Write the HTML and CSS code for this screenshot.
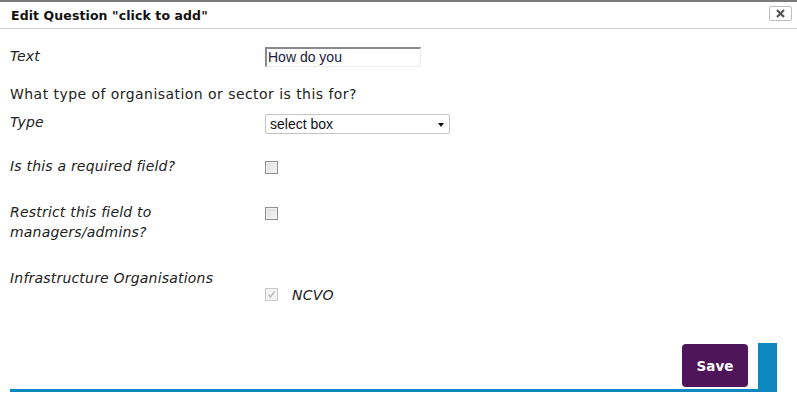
FILE: index.html
```html
<!DOCTYPE html>
<html>
<head>
<meta charset="utf-8">
<link rel="stylesheet" href="styles.css">
</head>
<body>
<div class="dialog">
  <div class="titlebar">
    <span class="title">Edit Question "click to add"</span>
    <button class="close" type="button" aria-label="close">
      <svg width="11" height="9" viewBox="0 0 11 9"><path d="M2 1 L9 8 M9 1 L2 8" stroke="#555" stroke-width="2.2" fill="none"/></svg>
    </button>
  </div>
  <div class="content">
    <div class="row row-text">
      <label class="lbl">Text</label>
      <div class="field"><div class="textinput">How do you</div></div>
    </div>
    <div class="question">What type of organisation or sector is this for?</div>
    <div class="row row-type">
      <label class="lbl">Type</label>
      <div class="field">
        <div class="select"><span>select box</span><span class="arrow"></span></div>
      </div>
    </div>
    <div class="row row-req">
      <label class="lbl">Is this a required field?</label>
      <div class="field"><span class="cb"></span></div>
    </div>
    <div class="row row-restrict">
      <label class="lbl">Restrict this field to<br>managers/admins?</label>
      <div class="field"><span class="cb"></span></div>
    </div>
    <div class="row row-infra">
      <label class="lbl">Infrastructure Organisations</label>
      <div class="field infra-field">
        <span class="cb cb-disabled">
          <svg width="11" height="11" viewBox="0 0 11 11"><path d="M2.5 5.5 L4.5 8 L8.5 2.5" stroke="#bbb" stroke-width="1.4" fill="none"/></svg>
        </span>
        <span class="opt">NCVO</span>
      </div>
    </div>
    <div class="footer">
      <button class="save" type="button">Save</button>
      <div class="bluebar"></div>
    </div>
  </div>
</div>
</body>
</html>
```

FILE: styles.css
```css
html, body {
  margin: 0;
  padding: 0;
  background: #fff;
}
body {
  font-family: "DejaVu Sans", Verdana, sans-serif;
  font-size: 14px;
  color: #222;
}
.dialog {
  width: 797px;
  border-top: 2px solid #7a7a7a;
}
.titlebar {
  height: 26px;
  border-bottom: 1px solid #cfcfcf;
  display: flex;
  align-items: flex-start;
  justify-content: space-between;
  padding: 0 5px 0 11px;
}
.title {
  font-weight: bold;
  font-size: 12.5px;
  color: #111;
  line-height: 16px;
  margin-top: 6px;
  letter-spacing: 0.1px;
}
.close {
  margin-top: 4px;
  width: 23px;
  height: 15px;
  border: 1px solid #bdbdbd;
  border-radius: 2px;
  background: #fff;
  padding: 0;
  display: flex;
  align-items: center;
  justify-content: center;
}
.content {
  padding: 17px 0 0 10px;
}
.row {
  display: grid;
  grid-template-columns: 255px 1fr;
  align-items: start;
}
.lbl {
  font-style: italic;
  line-height: 20px;
  letter-spacing: 0.2px;
}
.field {
  line-height: 20px;
}
.textinput {
  margin-top: 1px;
  width: 152px;
  height: 17px;
  border-top: 2px solid #8a8a8a;
  border-left: 2px solid #8a8a8a;
  border-right: 1px solid #ececec;
  border-bottom: 1px solid #ececec;
  font-family: "Liberation Sans", Arial, sans-serif;
  font-size: 14px;
  line-height: 17px;
  padding-left: 1px;
  color: #1a1a3a;
}
.question {
  margin-top: 17px;
  line-height: 20px;
  letter-spacing: 0.45px;
}
.row-type {
  margin-top: 8px;
}
.select {
  margin-top: 2px;
  width: 179px;
  height: 18px;
  border: 1px solid #c4c4c4;
  border-radius: 2px;
  display: flex;
  align-items: center;
  justify-content: space-between;
  padding: 0 0 0 4px;
  box-sizing: content-box;
  font-family: "Liberation Sans", Arial, sans-serif;
  font-size: 14px;
  color: #111;
}
.select .arrow {
  width: 0;
  height: 0;
  border-left: 3.5px solid transparent;
  border-right: 3.5px solid transparent;
  border-top: 4px solid #111;
  margin-right: 5px;
  margin-top: 1px;
}
.row-req {
  margin-top: 22px;
}
.row-restrict {
  margin-top: 26px;
}
.row-infra {
  margin-top: 26px;
}
.cb {
  display: block;
  width: 11px;
  height: 11px;
  margin-top: 5px;
  border: 1px solid #8f8f8f;
  background: linear-gradient(135deg, #dcdcdc 0%, #f6f6f6 100%);
  box-shadow: inset 0 0 0 1px #f0f0f0;
}
.infra-field {
  display: flex;
  align-items: flex-start;
  padding-top: 17px;
}
.cb-disabled {
  margin-top: 3px;
  border-color: #c8c8c8;
  background: #f4f4f4;
  box-shadow: none;
  display: flex;
  align-items: center;
  justify-content: center;
}
.cb-disabled svg {
  display: block;
}
.opt {
  font-style: italic;
  margin-left: 14px;
  line-height: 20px;
  letter-spacing: 0.2px;
}
.footer {
  margin: 38px 20px 0 0;
  display: flex;
  justify-content: flex-end;
  align-items: flex-start;
  border-bottom: 3px solid #0d87c0;
}
.save {
  margin: 1px 10px 2px 0;
  width: 66px;
  height: 43px;
  border: none;
  border-radius: 4px;
  background: #4e155a;
  color: #fff;
  font-family: "DejaVu Sans", Verdana, sans-serif;
  font-weight: bold;
  font-size: 13.5px;
  padding: 0;
}
.bluebar {
  width: 19px;
  height: 46px;
  background: #0d87c0;
}
```
